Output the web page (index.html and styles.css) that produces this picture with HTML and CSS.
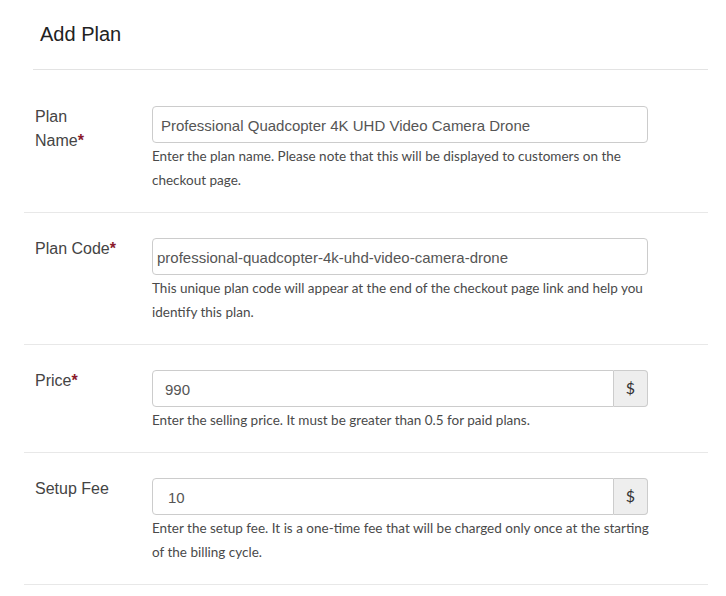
FILE: index.html
```html
<!DOCTYPE html>
<html>
<head>
<meta charset="utf-8">
<link rel="stylesheet" href="styles.css">
</head>
<body>
<div class="page">
  <div class="header"><h1 class="title">Add Plan</h1></div>
  <form class="form">
    <div class="row first">
      <label class="label">Plan Name<span class="req">*</span></label>
      <div class="field">
        <div class="input">Professional Quadcopter 4K UHD Video Camera Drone</div>
        <p class="help">Enter the plan name. Please note that this will be displayed to customers on the checkout page.</p>
      </div>
    </div>
    <div class="row">
      <label class="label">Plan Code<span class="req">*</span></label>
      <div class="field">
        <div class="input code">professional-quadcopter-4k-uhd-video-camera-drone</div>
        <p class="help">This unique plan code will appear at the end of the checkout page link and help you identify this plan.</p>
      </div>
    </div>
    <div class="row">
      <label class="label">Price<span class="req">*</span></label>
      <div class="field">
        <div class="group">
          <div class="input grouped price">990</div>
          <div class="addon">$</div>
        </div>
        <p class="help">Enter the selling price. It must be greater than 0.5 for paid plans.</p>
      </div>
    </div>
    <div class="row">
      <label class="label">Setup Fee</label>
      <div class="field">
        <div class="group">
          <div class="input grouped fee">10</div>
          <div class="addon">$</div>
        </div>
        <p class="help">Enter the setup fee. It is a one-time fee that will be charged only once at the starting of the billing cycle.</p>
      </div>
    </div>
  </form>
</div>
</body>
</html>
```
FILE: styles.css
```css
html, body {
  margin: 0;
  padding: 0;
  background: #ffffff;
}
.page {
  width: 684px;
  margin-left: 24px;
  font-family: "Liberation Sans", Arial, sans-serif;
}
.header {
  margin-left: 9px;
  border-bottom: 1px solid #e3e3e3;
  height: 70px;
  box-sizing: border-box;
}
.title {
  margin: 0;
  padding: 22px 0 0 7px;
  font-size: 20px;
  font-weight: normal;
  color: #222;
  line-height: 24px;
}
.form {
  margin: 0;
}
.row {
  display: flex;
  border-bottom: 1px solid #e8e8e8;
  padding: 25px 0 20px 0;
}
.row.first {
  padding-top: 36px;
  padding-bottom: 20px;
}
.label {
  width: 84px;
  padding: 0 33px 0 11px;
  font-size: 16px;
  line-height: 24px;
  color: #444;
  margin-top: -1px;
}
.req {
  color: #8b1a2b;
  font-weight: bold;
}
.field {
  width: 496px;
}
.input {
  height: 37px;
  box-sizing: border-box;
  border: 1px solid #cccccc;
  border-radius: 4px;
  padding: 2px 8px 0 8px;
  font-size: 15px;
  line-height: 33px;
  color: #555;
  white-space: nowrap;
  overflow: hidden;
}
.input.code {
  padding-left: 4px;
}
.group {
  display: flex;
}
.input.grouped {
  flex: 1;
  border-radius: 4px 0 0 4px;
}
.input.price {
  padding-left: 12px;
}
.input.fee {
  padding-left: 15px;
}
.addon {
  width: 34px;
  height: 37px;
  box-sizing: border-box;
  border: 1px solid #cccccc;
  border-left: none;
  border-radius: 0 4px 4px 0;
  background: #eeeeee;
  color: #333;
  font-family: "Lato", sans-serif;
  font-size: 16px;
  line-height: 33px;
  text-align: center;
}
.help {
  margin: 0 -10px 0 0;
  padding-top: 1px;
  font-family: "Lato", sans-serif;
  font-size: 13.5px;
  line-height: 24px;
  color: #4a4a4a;
}
```
